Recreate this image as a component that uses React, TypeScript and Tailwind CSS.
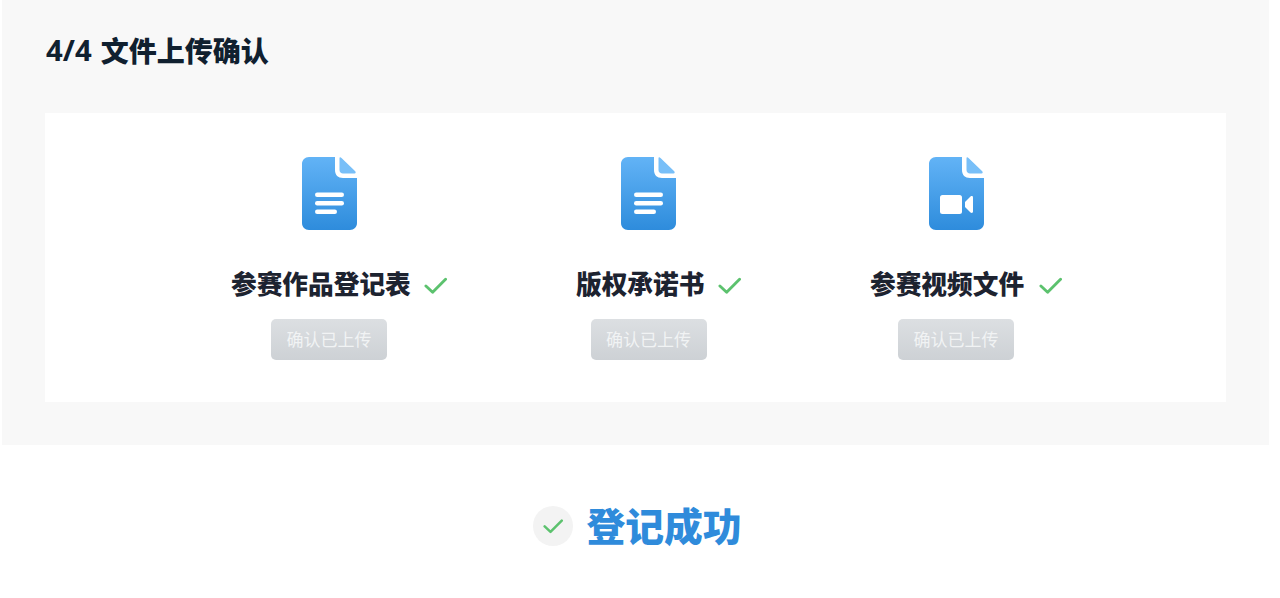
import React from 'react';

const fontStack = { fontFamily: '"Noto Sans", "Noto Sans CJK SC", sans-serif' };

const DocIcon: React.FC<{ id: string; video?: boolean }> = ({ id, video }) => (
  <svg width="55" height="73" viewBox="0 0 55 73" fill="none">
    <defs>
      <linearGradient id={id} x1="0" y1="0" x2="0" y2="1">
        <stop offset="0" stopColor="#62b3f6" />
        <stop offset="1" stopColor="#2e8cdc" />
      </linearGradient>
    </defs>
    <path
      d="M7 0H33V13C33 18 36 21 41 21H55V66C55 70 52 73 48 73H7C3 73 0 70 0 66V7C0 3 3 0 7 0Z"
      fill={`url(#${id})`}
    />
    <path d="M37.5 1.5C37.5 0 38.5 0 39.5 1L53 14C54 15 54 16.5 52.5 16.5H41C39 16.5 37.5 15 37.5 13Z" fill="#78bff8" />
    {video ? (
      <>
        <rect x="11" y="38" width="22" height="19" rx="2.5" fill="#fff" />
        <path d="M36 45L41.5 39.5C42.5 38.7 44 39 44 40.5V54.5C44 56 42.5 56.3 41.5 55.5L36 50Z" fill="#fff" />
      </>
    ) : (
      <>
        <rect x="13" y="35.5" width="29" height="4.5" rx="2.2" fill="#fff" />
        <rect x="13" y="44" width="29" height="4.5" rx="2.2" fill="#fff" />
        <rect x="13" y="52.5" width="22" height="4.5" rx="2.2" fill="#fff" />
      </>
    )}
  </svg>
);

const Check: React.FC<{ className?: string }> = ({ className }) => (
  <svg className={className} viewBox="0 0 24 24" fill="none">
    <path d="M2 12.5L9 19L22.5 5.5" stroke="#5cc26e" strokeWidth="3" strokeLinecap="round" strokeLinejoin="round" />
  </svg>
);

const files = [
  { id: 'g1', name: '参赛作品登记表', width: 'w-[196px]', video: false },
  { id: 'g2', name: '版权承诺书', width: 'w-[145px]', video: false },
  { id: 'g3', name: '参赛视频文件', width: 'w-[172px]', video: true },
];

export default function App() {
  return (
    <div className="h-[598px] bg-white overflow-hidden" style={fontStack}>
      <section className="ml-[2px] w-[1267px] h-[445px] bg-[#f8f8f8] px-[43px] flex flex-col">
        <h2 className="h-[113px] pb-[11px] flex items-center text-[28px] font-black text-[#10202f]">
          <span className="font-bold text-[29.3px] ml-[1px] mr-[9px]">4/4</span>
          文件上传确认
        </h2>
        <div className="h-[289px] w-[1181px] bg-white pt-[44px] pl-[2px] flex justify-center gap-[149px]">
          {files.map((f) => (
            <div key={f.id} className={`${f.width} flex flex-col items-center`}>
              <DocIcon id={f.id} video={f.video} />
              <div className="relative w-full mt-[36px] h-[38px] flex items-center whitespace-nowrap text-[25.7px] font-black text-[#1d2330]">
                {f.name}
                <Check className="absolute right-[-20px] top-[8px] w-[23px] h-[23px]" />
              </div>
              <button className="mt-[15px] w-[116px] h-[41px] rounded-[5px] bg-gradient-to-b from-[#dcdfe2] to-[#cdd1d5] text-[17px] text-[#f1f3f4] font-normal">
                确认已上传
              </button>
            </div>
          ))}
        </div>
      </section>
      <div className="mt-[59px] flex items-center justify-center gap-[13px] pr-[5px]">
        <span className="w-[40px] h-[40px] rounded-full bg-[#f3f3f3] flex items-center justify-center">
          <Check className="w-[20px] h-[20px]" />
        </span>
        <span className="text-[38.8px] leading-[44px] font-black text-[#2f8bdb]">登记成功</span>
      </div>
    </div>
  );
}
